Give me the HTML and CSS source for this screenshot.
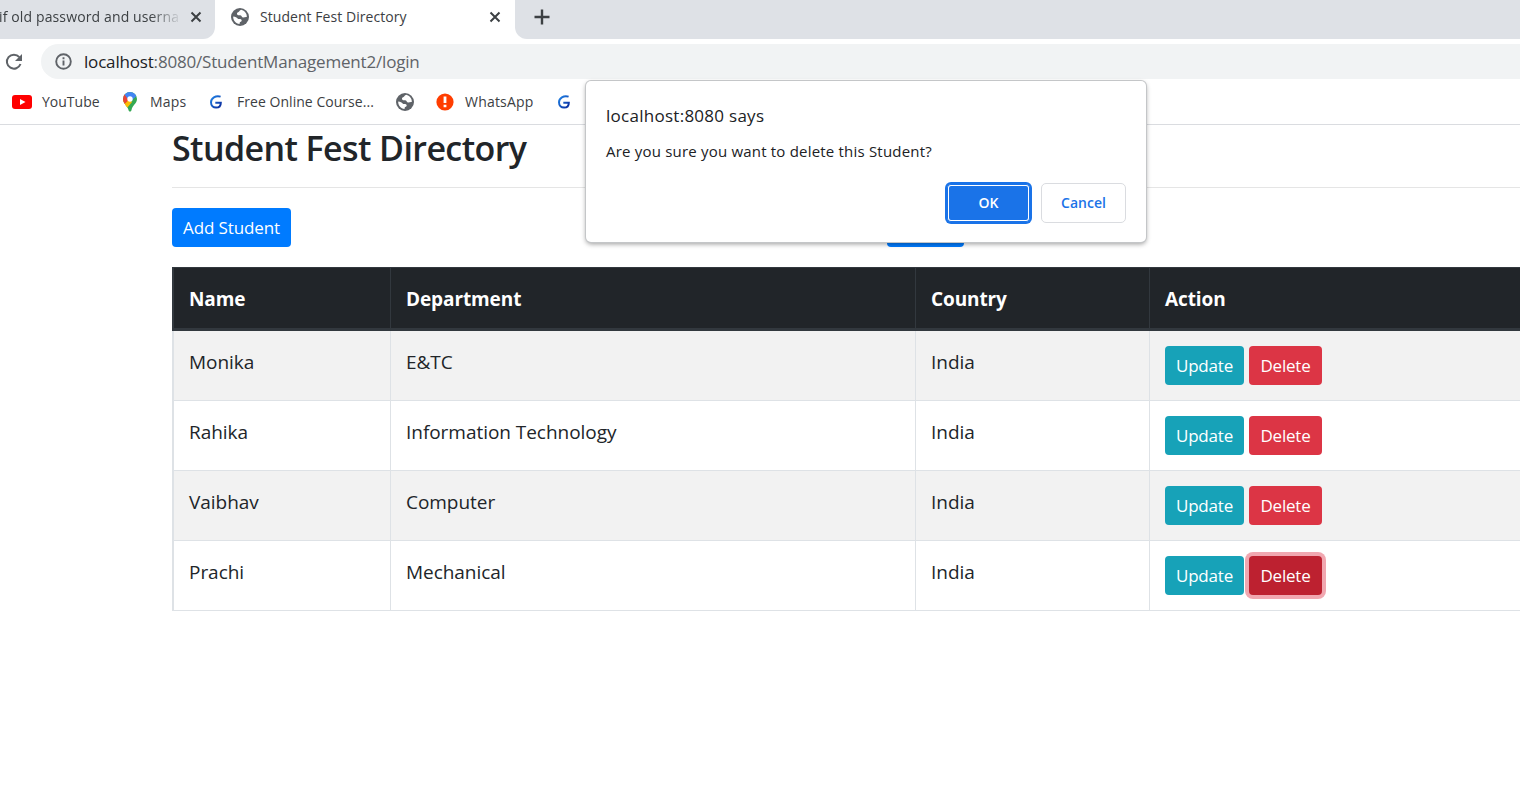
FILE: index.html
```
<!DOCTYPE html>
<html lang="en">
<head>
<meta charset="utf-8">
<title>Student Fest Directory</title>
<link rel="stylesheet" href="styles.css">
</head>
<body>
<svg class="defs" width="0" height="0" aria-hidden="true">
  <symbol id="globe" viewBox="0 0 18 18"><circle cx="9" cy="9" r="9" fill="#5f6368"/><path d="M10.2 1.8C8.6 2.2 8.6 3.6 7.5 4.1 6 4.7 5.8 5.2 6.2 6.4c.4 1 1.600 .7 2.800.8 1.800.100 1.500 2 2.900 2.200 1.300.200 2.300-.6 3.900-.3.3-3.500-2.100-6.500-5.600-7.300zM2.200 8.400c-.2 3.900 2.600 7.200 6.400 7.600-.1-1.200.2-1.800 1.200-2.200 1.300-.6 1.100-2.100.1-2.600-1-.5-2.500.1-3.300-.8-.9-1.100-2-1.900-4.400-2z" fill="#fff"/></symbol>
  <symbol id="close" viewBox="0 0 12 12"><path d="M1.500 1.500l9 9M10.500 1.500l-9 9" stroke="#3c4043" stroke-width="2" fill="none"/></symbol>
  <symbol id="gmark" viewBox="0 0 14 14"><path d="M11.600 1.600C6.500.2 2 3 2 7.300c0 3.300 2.300 5.300 5.100 5.300 3 0 4.700-1.900 4.700-4.900H6.300" stroke="url(#gblue)" stroke-width="2" fill="none"/></symbol>
  <linearGradient id="gblue" x2="1" y2="1"><stop offset="0" stop-color="#2185e8"/><stop offset="1" stop-color="#0a2a9c"/></linearGradient>
</svg>
<header class="browser">
  <div class="tabs">
    <div class="tab tab-old"><span class="old-title">if old password and userna</span><svg class="x"><use href="#close"/></svg></div>
    <div class="tab tab-active"><svg class="globe"><use href="#globe"/></svg><span class="tab-title">Student Fest Directory</span><svg class="x"><use href="#close"/></svg></div>
    <div class="tab-rest"><svg class="plus" viewBox="0 0 16 16"><path d="M8 .5v15M.5 8h15" stroke="#3c4043" stroke-width="2.400"/></svg></div>
  </div>
  <div class="toolbar">
    <svg class="reload" viewBox="0 0 18 18"><path d="M14.300 4.200A7 7 0 1 0 15.500 11" stroke="#5f6368" stroke-width="2" fill="none"/><path d="M17 1v7h-7z" fill="#5f6368"/></svg>
    <div class="address"><svg class="info" viewBox="0 0 17 17"><circle cx="8.500" cy="8.500" r="7.300" stroke="#5f6368" stroke-width="1.900" fill="none"/><path d="M8.500 7.500v5M8.500 4.300v1.900" stroke="#5f6368" stroke-width="1.900"/></svg><span class="url"><b>localhost</b>:8080/StudentManagement2/login</span></div>
  </div>
  <nav class="bookmarks">
    <svg class="yt" viewBox="0 0 20 14"><rect width="20" height="14" rx="3" fill="#f00"/><path d="M8 4l5.500 3L8 10z" fill="#fff"/></svg><span class="bm bm-yt">YouTube</span>
    <svg class="pin" viewBox="0 0 14 20"><defs><clipPath id="pc"><path d="M7 0a7 7 0 0 1 7 7c0 4.500-4.500 6-5.500 11-.4 2-2.600 2-3 0C4.500 14 0 11.500 0 7a7 7 0 0 1 7-7z"/></clipPath></defs><g clip-path="url(#pc)"><path d="M0 0h14v20H0z" fill="#34a853"/><path d="M0 8l3-1 6 2-6 7H0z" fill="#fbbc04"/><path d="M0 2h3l5 4-6 6-2-2z" fill="#ea4335"/><path d="M1.500 2.600L4 0h8l1.500 4L7 10z" fill="#4285f4"/><path d="M4.700 9L1 13l3 3 5-6z" fill="#fbbc04"/></g><circle cx="7" cy="7" r="2.700" fill="#fff"/></svg><span class="bm bm-maps">Maps</span>
    <svg class="gm"><use href="#gmark"/></svg><span class="bm bm-free">Free Online Course...</span>
    <svg class="globe globe-bm"><use href="#globe"/></svg>
    <svg class="alert" viewBox="0 0 18 18"><circle cx="9" cy="9" r="8.600" fill="#ff3d00"/><path d="M9 3.500v6.500M9 11.800v2.500" stroke="#fff" stroke-width="2.800"/></svg><span class="bm bm-wa">WhatsApp</span>
    <svg class="gm"><use href="#gmark"/></svg>
  </nav>
</header>
<main class="page">
  <h1>Student Fest Directory</h1>
  <div class="actions"><a class="btn primary">Add Student</a><a class="btn primary logout"></a></div>
  <div class="table">
    <div class="row head"><div>Name</div><div>Department</div><div>Country</div><div>Action</div></div>
    <div class="row odd"><div>Monika</div><div>E&amp;TC</div><div>India</div><div class="cell-btns"><a class="btn update">Update</a><a class="btn delete">Delete</a></div></div>
    <div class="row"><div>Rahika</div><div>Information Technology</div><div>India</div><div class="cell-btns"><a class="btn update">Update</a><a class="btn delete">Delete</a></div></div>
    <div class="row odd"><div>Vaibhav</div><div>Computer</div><div>India</div><div class="cell-btns"><a class="btn update">Update</a><a class="btn delete">Delete</a></div></div>
    <div class="row"><div>Prachi</div><div>Mechanical</div><div>India</div><div class="cell-btns"><a class="btn update">Update</a><a class="btn delete pressed">Delete</a></div></div>
  </div>
</main>
<div class="dialog" role="dialog">
  <p class="origin">localhost:8080 says</p>
  <p class="message">Are you sure you want to delete this Student?</p>
  <div class="choices"><button class="ok">OK</button><button class="cancel">Cancel</button></div>
</div>
</body>
</html>
```
FILE: styles.css
```
* { box-sizing: border-box; }
body { margin: 0; width: 1520px; height: 810px; overflow: hidden; position: relative; background: #fff; color: #212529; font-family: "Open Sans", "Noto Sans", sans-serif; }
.defs { position: absolute; }
svg { flex: none; display: block; }
span { white-space: nowrap; }

.browser { height: 125px; border-bottom: 1px solid #dadce0; }
.tabs { display: flex; height: 39px; background: #fff; font-size: 14px; color: #3c4043; }
.tab { display: flex; align-items: center; height: 34px; }
.tab-old { width: 215px; height: 39px; padding-bottom: 5px; background: #dee1e6; border-radius: 0 0 12px 0; }
.old-title, .tab-title { padding-bottom: 2px; }
.old-title { width: 180px; overflow: hidden; text-indent: -1px; letter-spacing: .13px; -webkit-mask-image: linear-gradient(90deg, #000 150px, transparent 182px); mask-image: linear-gradient(90deg, #000 150px, transparent 182px); }
.x { width: 12px; height: 12px; margin-left: 10px; }
.tab-active { width: 300px; padding-left: 16px; }
.tab-active .x { margin-left: auto; margin-right: 14px; }
.globe { width: 18px; height: 18px; }
.tab-title { margin-left: 11px; letter-spacing: .05px; }
.tab-rest { flex: 1; background: #dee1e6; border-radius: 0 0 0 12px; padding: 9px 0 0 19px; }
.plus { width: 16px; height: 16px; }

.toolbar { display: flex; align-items: center; height: 45px; padding-left: 5px; }
.reload { width: 18px; height: 18px; }
.address { display: flex; align-items: center; flex: 1; height: 35px; margin-left: 18px; padding-left: 14px; background: #f1f3f4; border-radius: 18px 0 0 18px; }
.info { width: 17px; height: 17px; margin-right: 12px; }
.url { font-size: 17px; letter-spacing: -.18px; color: #5f6368; }
.url b { font-weight: 400; color: #202124; }

.bookmarks { display: flex; align-items: center; height: 35px; padding-left: 12px; font-size: 14px; color: #3c4043; }
.bm { margin-left: 10px; }
.yt { width: 20px; height: 14px; }
.bm-yt { width: 81px; }
.pin { width: 14px; height: 20px; }
.bm-maps { width: 59px; margin-left: 13px; letter-spacing: .2px; }
.gm { width: 14px; height: 14px; }
.bm-free { width: 159px; margin-left: 14px; letter-spacing: .04px; }
.globe-bm { margin-right: 22px; }
.alert { width: 18px; height: 18px; }
.bm-wa { width: 92px; margin-left: 11px; letter-spacing: .2px; }

.page { padding-left: 172px; }
h1 { margin: 0 0 20px; height: 63px; border-bottom: 1px solid #e5e5e5; font-size: 34px; font-weight: 600; letter-spacing: -.6px; line-height: 46px; }
.actions { display: flex; gap: 596px; height: 59px; }
.btn { display: flex; align-items: center; justify-content: center; height: 39px; border-radius: 4px; color: #fff; font-size: 17px; letter-spacing: -.12px; }
.primary { width: 119px; background: #007bff; }
.logout { width: 77px; }
.table { border-left: 2px solid #dee2e6; font-size: 19px; letter-spacing: -.04px; line-height: 30px; }
.row { display: grid; grid-template-columns: 217px 525px 234px 372px; height: 70px; border-bottom: 1px solid #dee2e6; }
.row > div { padding: 16px 15px 0; border-right: 1px solid #dee2e6; }
.row > div:last-child { border-right: 0; }
.odd { background: #f2f2f2; }
.head { height: 64px; margin-left: -2px; border: solid #32383e; border-width: 1px 0 3px 2px; background: #212529; color: #fff; font-weight: 700; letter-spacing: -.1px; }
.head > div { border-color: #32383e; }
.row > .cell-btns { display: flex; gap: 5px; padding-top: 15px; }
.update, .delete { letter-spacing: -.2px; }
.update { width: 79px; background: #17a2b8; }
.delete { width: 73px; background: #dc3545; }
.pressed { background: #bd2130; box-shadow: 0 0 0 4px #f1a7b0; }

.dialog { position: absolute; left: 586px; top: 81px; width: 560px; height: 161px; padding: 20px; background: #fff; border-radius: 5px; box-shadow: 0 0 0 1px #c4c6c8, 0 2px 5px rgba(0,0,0,.4); color: #202124; }
.dialog p { margin: 0; }
.origin { font-size: 17px; line-height: 30px; letter-spacing: .27px; }
.message { font-size: 15px; line-height: 24px; padding-top: 8px; letter-spacing: .2px; }
.choices { display: flex; justify-content: flex-end; gap: 10px; padding-top: 20px; }
.choices button { height: 40px; padding: 0 0 2px; border-radius: 5px; font-family: inherit; font-size: 14px; font-weight: 600; }
.ok { width: 85px; background: #1a73e8; color: #fff; border: 1px solid #1a73e8; box-shadow: inset 0 0 0 1px #1a73e8, inset 0 0 0 2px #fff, 0 0 0 1px #1a73e8; }
.cancel { width: 85px; background: #fff; color: #1a73e8; border: 1px solid #dadce0; }
```
